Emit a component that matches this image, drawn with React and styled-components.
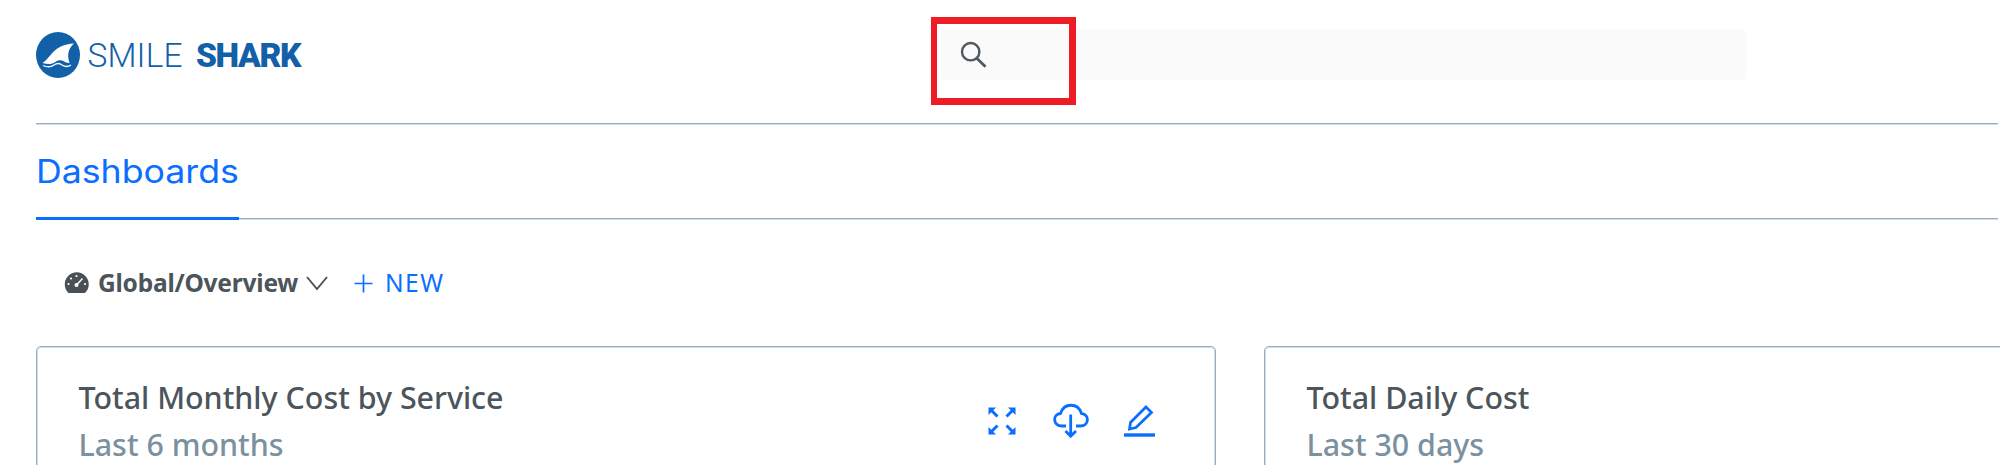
import React from "react";
import styled, { createGlobalStyle } from "styled-components";

const Global = createGlobalStyle`
  * { box-sizing: border-box; }
  body { margin: 0; background: #fff; overflow: hidden; font-family: "Noto Sans", sans-serif; color: #4b555b; }
`;

const Page = styled.div`
  height: 465px;
  padding-left: 36px;
  overflow: hidden;
`;
const Header = styled.header`
  height: 125px;
  margin-right: 2px;
  display: flex;
  align-items: flex-start;
  border-bottom: 1px solid #d3dce3;
  box-shadow: inset 0 -1px 0 #9aafbd;
`;
const Logo = styled.svg`
  display: block;
  margin-top: 26px;
  width: 270px;
  height: 58px;
`;
const SearchBar = styled.div`
  position: relative;
  width: 805px;
  height: 51px;
  margin: 29px 0 0 635px;
  padding: 10px 0 0 18px;
  border-radius: 4px;
  background: #fafafa;
`;
const Highlight = styled.div`
  position: absolute;
  left: -10px;
  top: -12px;
  width: 145px;
  height: 88px;
  border: solid #ee1c25;
  border-width: 7px 7px 7px 6px;
`;
const Icon = styled.svg`
  display: block;
  flex: none;
  width: ${(p) => p.$w}px;
  height: ${(p) => p.$h}px;
`;
const Tabs = styled.nav`
  height: 95px;
  margin-right: 2px;
  display: flex;
  border-bottom: 1px solid #d3dce3;
  box-shadow: inset 0 -1px 0 #9aafbd;
`;
const Tab = styled.a`
  width: 203px;
  height: 95px;
  flex: none;
  padding-top: 24px;
  white-space: nowrap;
  border-bottom: 3px solid #0a6eff;
  color: #0a6eff;
  font: 400 32px/46px Inter, sans-serif;
`;
const TabLabel = styled.span`
  display: inline-block;
  transform: scaleX(1.115);
  transform-origin: left;
`;
const Toolbar = styled.div`
  height: 126px;
  padding: 0 0 0 28px;
  display: flex;
  align-items: center;
`;
const DashboardName = styled.span`
  width: 200px;
  margin: 0 8px 0 9px;
  white-space: nowrap;
  font-size: 24.5px;
  letter-spacing: -0.22px;
  line-height: 34px;
  font-weight: 700;
`;
const NewButton = styled.button`
  margin-left: 26px;
  padding: 0;
  border: 0;
  background: none;
  display: flex;
  align-items: center;
  gap: 12px;
  color: #0a6eff;
  font: 380 24.5px/34px "Noto Sans", sans-serif;
  letter-spacing: 1.5px;
`;
const Cards = styled.main`
  display: flex;
  gap: 48px;
`;
const Card = styled.section`
  flex: none;
  width: 1180px;
  height: 400px;
  padding: 28px 58px 0 41.5px;
  display: flex;
  justify-content: space-between;
  border: 1px solid #9aafbd;
  border-radius: 5px;
  box-shadow: inset 0 0 0 1px #d3dce3;
`;
const Title = styled.h2`
  margin: 0;
  font-size: 30.4px;
  line-height: 46px;
  font-weight: 500;
  white-space: nowrap;
`;
const Period = styled.p`
  margin: 0;
  font-size: 30.4px;
  line-height: 47px;
  font-weight: 500;
  color: #7b919f;
  white-space: nowrap;
`;
const Actions = styled.div`
  padding-top: 28px;
  display: flex;
  gap: 34px;
`;

const Brand = () => (
  <Logo viewBox="36 26 270 58" fill="#1260a8">
    <ellipse cx="58" cy="55" rx="22" ry="23" />
    <path d="M42.500 63C51 58 53 44.500 74 43.500C68 49 67 55 69.500 63C66.500 63 64.500 61.500 62 60.500C59 60 57.500 60.500 55 62.300C52 64.500 47.500 64.500 42.500 63Z" fill="#fff" />
    <path d="M43 65.500C46.500 67 50.500 67.500 54 65C57 63 59 62.500 62 65C65 67 68 67 71 65" fill="none" stroke="#fff" strokeWidth="1.300" />
    <text x="87.500" y="66.500" fontFamily="Roboto, sans-serif" fontWeight="300" fontSize="33.500" textLength="95" lengthAdjust="spacing">SMILE</text>
    <text x="196" y="66.500" fontFamily="Roboto, sans-serif" fontWeight="900" fontSize="33.500" textLength="105.500" lengthAdjust="spacing">SHARK</text>
  </Logo>
);

const SearchIcon = () => (
  <Icon $w={30} $h={30} viewBox="959 39 30 30" fill="none" stroke="#51595f" strokeWidth="2.400">
    <circle cx="970.700" cy="51.700" r="8.700" />
    <path d="M976.500 58L985.500 66.800" strokeWidth="2.800" />
  </Icon>
);

const GaugeIcon = () => (
  <Icon $w={25} $h={24} viewBox="64.500 272 25 24">
    <path d="M69 294A12 12 0 1 1 85.500 294Z" fill="#495057" />
    <g fill="#fff">
      <circle cx="77" cy="277" r="1.100" />
      <circle cx="71.500" cy="279.500" r="1.100" />
      <circle cx="69" cy="285" r="1.100" />
      <circle cx="85.500" cy="285" r="1.100" />
      <circle cx="77" cy="286" r="2" />
    </g>
    <path d="M77 286L83 279.500" stroke="#fff" strokeWidth="1.500" />
  </Icon>
);

const ChevronIcon = () => (
  <Icon $w={22} $h={16} viewBox="0 0 22 16" fill="none" stroke="#495057" strokeWidth="1.900">
    <path d="M1 2L11 14L21 2" />
  </Icon>
);

const PlusIcon = () => (
  <Icon $w={19} $h={19} viewBox="0 0 19 19" stroke="#0a6eff" strokeWidth="1.700">
    <path d="M9.500 0.500V18.500M0.500 9.500H18.500" />
  </Icon>
);

const ExpandIcon = () => (
  <Icon $w={34} $h={36} viewBox="985 403 34 36" fill="#0a6eff" stroke="#0a6eff" strokeWidth="3">
    <path d="M991 410L997.500 416.500M1013 410L1006.500 416.500M991 432L997.500 425.500M1013 432L1006.500 425.500" />
    <path d="M988.500 407.500H996L988.500 415ZM1015.500 407.500H1008L1015.500 415ZM988.500 434.500H996L988.500 427ZM1015.500 434.500H1008L1015.500 427Z" stroke="none" />
  </Icon>
);

const CloudIcon = () => (
  <Icon $w={36} $h={36} viewBox="1053 403 36 36" fill="none" stroke="#0a6eff" strokeWidth="2.800">
    <path d="M1066 426H1062C1052.500 426 1052.500 414 1060.500 413.500C1064 402.500 1078 402.500 1081.500 413.500C1090 414.500 1089 426 1080.500 426H1076" />
    <path d="M1070.700 414.500V436M1065.500 431L1070.700 436.300L1076 431" />
  </Icon>
);

const EditIcon = () => (
  <Icon $w={34} $h={36} viewBox="1123 403 34 36" fill="none" stroke="#0a6eff" strokeWidth="2.700">
    <path d="M1129.500 429L1130.500 422.500L1146 407L1151.500 412.500L1136 427.500Z" />
    <path d="M1124 435H1155" strokeWidth="3.400" />
  </Icon>
);

const CostCard = ({ title, period, actions }) => (
  <Card>
    <div>
      <Title>{title}</Title>
      <Period>{period}</Period>
    </div>
    {actions && (
      <Actions>
        <ExpandIcon />
        <CloudIcon />
        <EditIcon />
      </Actions>
    )}
  </Card>
);

export default function App() {
  return (
    <>
      <Global />
      <Page>
        <Header>
          <Brand />
          <SearchBar>
            <SearchIcon />
            <Highlight />
          </SearchBar>
        </Header>
        <Tabs>
          <Tab><TabLabel>Dashboards</TabLabel></Tab>
        </Tabs>
        <Toolbar>
          <GaugeIcon />
          <DashboardName>Global/Overview</DashboardName>
          <ChevronIcon />
          <NewButton>
            <PlusIcon />
            NEW
          </NewButton>
        </Toolbar>
        <Cards>
          <CostCard title="Total Monthly Cost by Service" period="Last 6 months" actions />
          <CostCard title="Total Daily Cost" period="Last 30 days" />
        </Cards>
      </Page>
    </>
  );
}
